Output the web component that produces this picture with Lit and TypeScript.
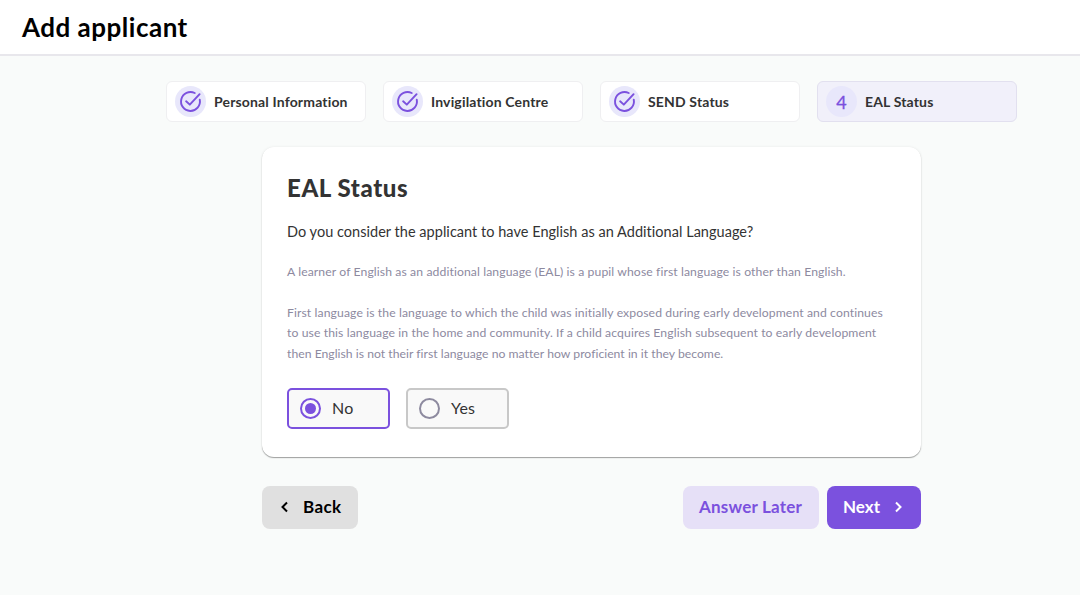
import { LitElement, html, css, svg } from "lit";
import { customElement, property, state } from "lit/decorators.js";
import { classMap } from "lit/directives/class-map.js";

const checkIcon = svg`
  <path d="M22.6 10A10.8 10.8 0 1 1 16.8 2.3"></path>
  <path d="M22.4 3.6 11.2 15.6 7 11.8"></path>
`;

@customElement("step-item")
export class StepItem extends LitElement {
  @property({ type: Number }) number = 1;
  @property() label = "";
  @property({ type: Boolean }) done = false;
  @property({ type: Boolean }) active = false;

  static styles = css`
    :host {
      display: block;
    }
    .step {
      box-sizing: border-box;
      display: flex;
      align-items: center;
      gap: 8px;
      height: 41px;
      padding: 0 8px 0 8px;
      background: #fff;
      border: 1px solid #efeff1;
      border-radius: 6px;
    }
    .step.active {
      background: #f1f0fa;
      border-color: #e2e0ef;
    }
    .badge {
      display: flex;
      align-items: center;
      justify-content: center;
      width: 31px;
      height: 31px;
      border-radius: 50%;
      background: #e8e7fb;
      color: #7b51de;
      font-size: 18px;
      -webkit-text-stroke: 0.3px #7b51de;
    }
    .badge svg {
      width: 21px;
      height: 21px;
      fill: none;
      stroke: #7b51de;
      stroke-width: 2.2;
      stroke-linecap: round;
      stroke-linejoin: round;
      overflow: visible;
    }
    .label {
      font-size: 14px;
      font-weight: 700;
      letter-spacing: 0.16px;
      color: #333;
      white-space: nowrap;
    }
  `;

  render() {
    return html`
      <div class=${classMap({ step: true, active: this.active })}>
        <div class="badge">
          ${this.done
            ? html`<svg viewBox="0 0 24 24">${checkIcon}</svg>`
            : this.number}
        </div>
        <div class="label">${this.label}</div>
      </div>
    `;
  }
}

@customElement("app-root")
export class AppRoot extends LitElement {
  @state() answer = "No";

  steps = ["Personal Information", "Invigilation Centre", "SEND Status", "EAL Status"];
  current = 4;

  static styles = css`
    :host {
      display: block;
      min-height: 595px;
      background: #f9fbfa;
      font-family: Lato, "Liberation Sans", sans-serif;
      font-variant-ligatures: none;
      color: #333;
    }
    .header {
      box-sizing: border-box;
      height: 56px;
      padding: 10px 22px 0;
      background: #fff;
      border-bottom: 2px solid #e8e7ec;
    }
    .header h1 {
      margin: 0;
      font-size: 26px;
      line-height: 34px;
      font-weight: 700;
      letter-spacing: 0.5px;
      color: #000;
    }
    .steps {
      display: grid;
      grid-template-columns: repeat(4, 200px);
      gap: 17px;
      padding: 25px 0 0 166px;
    }
    .content {
      width: 659px;
      margin: 25px 0 0 262px;
    }
    .card {
      box-sizing: border-box;
      height: 310px;
      padding: 25px 25px 0;
      background: #fff;
      border-radius: 12px;
      box-shadow: 0 1px 1px rgba(0, 0, 0, 0.35), 0 0 3px rgba(0, 0, 0, 0.07);
    }
    h2 {
      margin: 0;
      font-size: 24px;
      line-height: 32px;
      font-weight: 900;
      letter-spacing: 0.6px;
    }
    p {
      margin: 0;
      white-space: nowrap;
    }
    .question {
      margin-top: 18px;
      font-size: 14.5px;
      line-height: 20px;
      letter-spacing: 0.03px;
    }
    .help {
      margin-top: 20.5px;
      font-size: 12.2px;
      line-height: 20.5px;
      letter-spacing: 0.1px;
      color: #8d8a9f;
    }
    .question + .help {
      margin-top: 19.5px;
    }
    .tight {
      letter-spacing: 0.02px;
    }
    .options {
      display: flex;
      gap: 16px;
      margin-top: 23.5px;
    }
    .option {
      box-sizing: border-box;
      display: flex;
      align-items: center;
      gap: 11px;
      width: 103px;
      height: 41px;
      padding-left: 11px;
      border: 2px solid #c8c8c8;
      border-radius: 5px;
      background: #f9f9f9;
      font-size: 16px;
      line-height: 20px;
      letter-spacing: 0.2px;
      cursor: pointer;
    }
    .option.checked {
      border-color: #7b51de;
    }
    .radio {
      box-sizing: border-box;
      display: flex;
      align-items: center;
      justify-content: center;
      width: 21px;
      height: 21px;
      border: 2px solid #8d8a9f;
      border-radius: 50%;
    }
    .checked .radio {
      border-color: #7b51de;
    }
    .checked .radio::after {
      content: "";
      width: 11px;
      height: 11px;
      border-radius: 50%;
      background: #7b51de;
    }
    .actions {
      display: flex;
      gap: 8px;
      margin-top: 29px;
    }
    button {
      display: flex;
      align-items: center;
      box-sizing: border-box;
      height: 43px;
      padding: 0 16px 1px;
      border: 0;
      border-radius: 8px;
      font-family: inherit;
      font-size: 17px;
      line-height: 20px;
      font-weight: 700;
      letter-spacing: 0.2px;
      white-space: nowrap;
    }
    button svg {
      width: 12px;
      height: 12px;
      fill: none;
      stroke: currentColor;
      stroke-width: 2;
    }
    .back {
      gap: 12px;
      width: 96px;
      padding-left: 17px;
      margin-right: auto;
      background: #e0e0e0;
      color: #000;
      letter-spacing: 0.4px;
    }
    .later {
      width: 136px;
      background: #e6e0f7;
      color: #7b51de;
    }
    .next {
      justify-content: space-between;
      width: 94px;
      background: #7b51de;
      color: #fff;
      letter-spacing: 0;
    }
  `;

  select(value: string) {
    this.answer = value;
  }

  renderOption(value: string) {
    return html`
      <div
        class=${classMap({ option: true, checked: this.answer === value })}
        @click=${() => this.select(value)}
      >
        <span class="radio"></span>
        <span>${value}</span>
      </div>
    `;
  }

  render() {
    return html`
      <div class="header"><h1>Add applicant</h1></div>
      <div class="steps">
        ${this.steps.map(
          (label, i) => html`
            <step-item
              .number=${i + 1}
              .label=${label}
              ?done=${i + 1 < this.current}
              ?active=${i + 1 === this.current}
            ></step-item>
          `
        )}
      </div>
      <div class="content">
        <div class="card">
          <h2>EAL Status</h2>
          <p class="question">
            Do you consider the applicant to have English as an Additional Language?
          </p>
          <p class="help">
            A learner of English as an additional language (EAL) is a pupil whose first language is
            other than English.
          </p>
          <p class="help">
            First language is the language to which the child was initially exposed during early
            development and continues<br />to use this language in the home and community. If a
            child acquires English subsequent to early development<br /><span class="tight"
              >then English is not their first language no matter how proficient in it they
              become.</span
            >
          </p>
          <div class="options">${this.renderOption("No")} ${this.renderOption("Yes")}</div>
        </div>
        <div class="actions">
          <button class="back">
            <svg viewBox="0 0 12 12"><path d="M8 1.5 3.5 6 8 10.5"></path></svg>
            Back
          </button>
          <button class="later">Answer Later</button>
          <button class="next">
            Next
            <svg viewBox="0 0 12 12"><path d="M3 1.5 7.5 6 3 10.5"></path></svg>
          </button>
        </div>
      </div>
    `;
  }
}
